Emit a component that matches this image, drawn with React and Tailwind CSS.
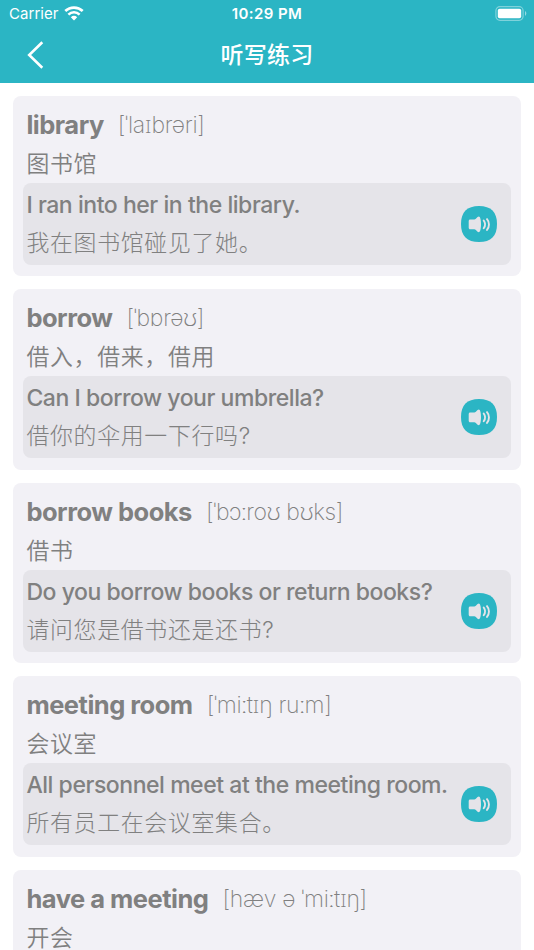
import React from "react";

const words = [
  {
    id: 1,
    word: "library",
    phonetic: "[ˈlaɪbrəri]",
    meaning: "图书馆",
    sentence: "I ran into her in the library.",
    translation: "我在图书馆碰见了她。",
  },
  {
    id: 2,
    word: "borrow",
    phonetic: "[ˈbɒrəʊ]",
    meaning: "借入，借来，借用",
    sentence: "Can I borrow your umbrella?",
    translation: "借你的伞用一下行吗?",
  },
  {
    id: 3,
    word: "borrow books",
    phonetic: "[ˈbɔːroʊ bʊks]",
    meaning: "借书",
    sentence: "Do you borrow books or return books?",
    translation: "请问您是借书还是还书?",
  },
  {
    id: 4,
    word: "meeting room",
    phonetic: "[ˈmiːtɪŋ ruːm]",
    meaning: "会议室",
    sentence: "All personnel meet at the meeting room.",
    translation: "所有员工在会议室集合。",
  },
  {
    id: 5,
    word: "have a meeting",
    phonetic: "[hæv ə ˈmiːtɪŋ]",
    meaning: "开会",
  },
];

const WifiIcon = () => (
  <svg width="20" height="15" viewBox="0 0 20 15" fill="none">
    <path d="M1.3 5.1a12.6 12.6 0 0 1 17.4 0" stroke="#fff" strokeWidth="2.7" />
    <path d="M4.4 8.6a8 8 0 0 1 11.2 0" stroke="#fff" strokeWidth="2.5" />
    <path d="M10 14.6 6.8 11.3a4.7 4.7 0 0 1 6.4 0z" fill="#fff" />
  </svg>
);

const BatteryIcon = () => (
  <svg width="32" height="15" viewBox="0 0 32 15" fill="none">
    <rect x="0.9" y="0.7" width="27.2" height="13.6" rx="4" stroke="#fff" strokeOpacity="0.4" strokeWidth="1.2" />
    <rect x="2.8" y="2.8" width="23.4" height="9.4" rx="1.8" fill="#fff" />
    <path d="M30 5.1c1.8.8 1.8 4 0 4.8z" fill="#fff" fillOpacity="0.5" />
  </svg>
);

const SpeakerIcon = () => (
  <svg width="36" height="36" viewBox="0 0 36 36" fill="none">
    <path
      d="M18 0C30 0 36 6 36 18S30 36 18 36 0 30 0 18 6 0 18 0z"
      fill="#2bb5c4"
    />
    <path
      d="M9.2 13.5h4.2c1.8 0 2.6-2.9 4.4-2.9 1.4 0 2.2 3.2 2.2 7.6s-.8 8-2.2 8c-1.8 0-2.6-2.9-4.4-2.9H9.2c-.9 0-1.5-.6-1.5-1.5v-6.8c0-.9.6-1.5 1.5-1.5z"
      fill="#e5e4e9"
    />
    <path d="M22.7 14.5c1.6 2.2 1.6 5.6 0 7.8" stroke="#e5e4e9" strokeWidth="1.9" strokeLinecap="round" />
    <path d="M26 13.1c2.6 3 2.6 7.6 0 10.8" stroke="#e5e4e9" strokeWidth="1.9" strokeLinecap="round" />
  </svg>
);

const WordCard = ({ item }) => {
  return (
    <div className="h-[180.5px] shrink-0 rounded-[8px] bg-[#f2f1f6] pt-[7px] px-[10.4px]">
      <div className="flex h-[44px] items-center gap-[14px] pl-[3px] whitespace-nowrap">
        <p className="text-[25.5px] leading-[36px] font-bold tracking-[-0.5px]">{item.word}</p>
        <p className="font-[Inter,'Noto_Sans','Open_Sans',sans-serif] text-[23px] leading-[36px] font-extralight tracking-[-0.32px]">
          {item.phonetic}
        </p>
      </div>
      <p className="h-[36px] pl-[3px] text-[22.9px] leading-[35px] font-[350] tracking-[0.7px]">
        {item.meaning}
      </p>
      {item.sentence && (
        <div className="flex h-[82px] items-center justify-between rounded-[8px] bg-[#e5e4e9] pl-[3px] pr-[13.4px]">
          <div className="whitespace-nowrap">
            <p className="h-[39px] text-[23px] leading-[40.5px] font-medium tracking-[-0.45px]">
              {item.sentence}
            </p>
            <p className="h-[39px] text-[22.9px] leading-[38px] font-light tracking-[0.7px]">
              {item.translation}
            </p>
          </div>
          <button>
            <SpeakerIcon />
          </button>
        </div>
      )}
    </div>
  );
};

const App = () => {
  return (
    <div className="h-[950px] w-[534px] overflow-hidden bg-white font-[Inter,'Noto_Sans_CJK_SC',sans-serif] text-[#808080]">
      <header className="h-[83px] bg-[#2bb5c4] text-white">
        <div className="grid h-[27px] grid-cols-[1fr_auto_1fr] items-center pl-[9px] pr-[7px] text-[15px]">
          <div className="flex items-center gap-[5px]">
            <span className="pt-[2px] tracking-[0.05px]">Carrier</span>
            <WifiIcon />
          </div>
          <span className="pt-[2px] pr-[2px] text-center font-semibold tracking-[0.4px]">10:29 PM</span>
          <div className="flex justify-end">
            <BatteryIcon />
          </div>
        </div>
        <div className="grid h-[56px] grid-cols-3 items-center">
          <button className="pl-[27px]">
            <svg width="17" height="28" viewBox="0 0 17 28" fill="none">
              <path d="M15.3 1.2 2.2 14l13.1 12.8" stroke="#fff" strokeWidth="2.6" />
            </svg>
          </button>
          <h1 className="text-center text-[23px] font-medium tracking-[0.3px]">听写练习</h1>
        </div>
      </header>
      <main className="flex flex-col gap-[13px] px-[13px] pt-[12.7px]">
        {words.map((item) => (
          <WordCard key={item.id} item={item} />
        ))}
      </main>
    </div>
  );
};

export default App;
